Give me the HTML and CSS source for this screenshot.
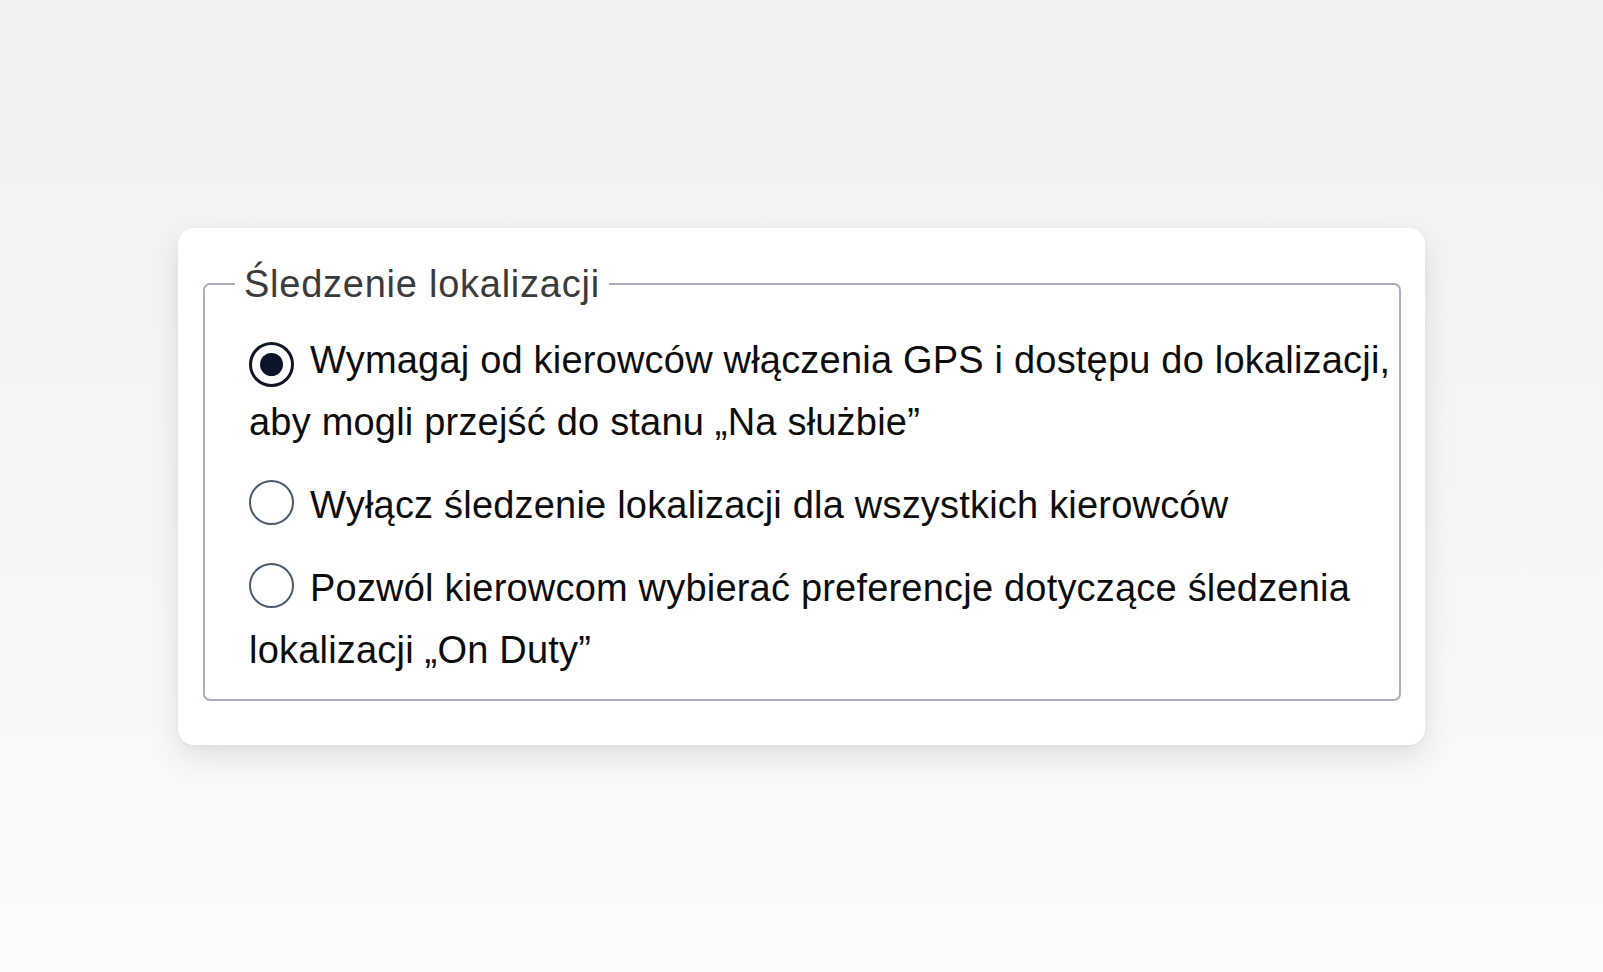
FILE: index.html
```html
<!DOCTYPE html>
<html lang="pl">
<head>
<meta charset="utf-8">
<title>Śledzenie lokalizacji</title>
<link rel="stylesheet" href="styles.css">
</head>
<body>
  <main class="page">
    <section class="card">
      <fieldset class="group">
        <legend class="group-title">Śledzenie lokalizacji</legend>
        <div class="options">
          <label class="option">
            <input class="option-input" type="radio" name="tracking" value="require" checked>
            <span class="radio radio--on"></span>Wymagaj od kierowców włączenia GPS i dostępu do lokalizacji, aby mogli przejść do stanu „Na służbie”
          </label>
          <label class="option">
            <input class="option-input" type="radio" name="tracking" value="off">
            <span class="radio"></span>Wyłącz śledzenie lokalizacji dla wszystkich kierowców
          </label>
          <label class="option">
            <input class="option-input" type="radio" name="tracking" value="driver">
            <span class="radio"></span>Pozwól kierowcom wybierać preferencje dotyczące śledzenia lokalizacji „On Duty”
          </label>
        </div>
      </fieldset>
    </section>
  </main>
</body>
</html>
```
FILE: styles.css
```css
* {
  box-sizing: border-box;
}

html,
body {
  margin: 0;
  height: 100%;
}

body {
  background: linear-gradient(180deg, #f1f1f1 0%, #f6f6f6 55%, #fbfbfb 100%);
  font-family: "Liberation Sans", Arial, Helvetica, sans-serif;
  color: #111111;
}

.page {
  min-height: 100vh;
  display: flex;
  align-items: center;
  justify-content: center;
}

.card {
  width: 1247px;
  background: #ffffff;
  border-radius: 16px;
  padding: 35px 24px 44px 25px;
  box-shadow: 0 12px 30px rgba(0, 0, 0, 0.10), 0 2px 6px rgba(0, 0, 0, 0.04);
}

.group {
  margin: 0;
  min-width: 0;
  border: 2px solid #abacc2;
  border-radius: 7px;
  padding: 23px 6px 18px 44px;
}

.group-title {
  margin-left: -14px;
  padding: 0 9px;
  font-size: 38px;
  letter-spacing: 0.75px;
  color: #3b3b3d;
}

.options {
  display: flex;
  flex-direction: column;
  gap: 21px;
}

.option {
  display: block;
  font-size: 38px;
  line-height: 62px;
  letter-spacing: 0.2px;
  color: #0d0d0d;
  cursor: pointer;
}

.option-input {
  position: absolute;
  opacity: 0;
  width: 0;
  height: 0;
  margin: 0;
}

.radio {
  display: inline-block;
  position: relative;
  width: 45px;
  height: 45px;
  margin-right: 16px;
  border: 2.5px solid #4a5a70;
  border-radius: 50%;
  vertical-align: -7px;
}

.radio--on {
  border: 3px solid #0f1628;
  vertical-align: -14px;
}

.radio--on::after {
  content: "";
  position: absolute;
  left: 50%;
  top: 50%;
  width: 23px;
  height: 23px;
  margin: -11.5px 0 0 -11.5px;
  border-radius: 50%;
  background: #0c1429;
}
```
